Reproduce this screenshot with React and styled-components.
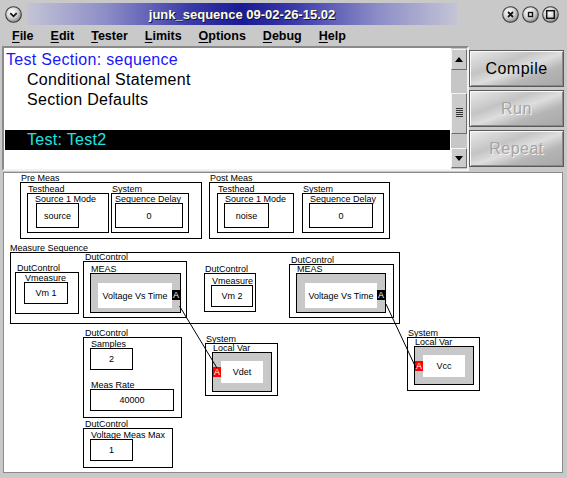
import React from "react"
import styled, { createGlobalStyle } from "styled-components"

const GlobalStyle = createGlobalStyle`
    html, body { margin:0; padding:0; background:#c9c9c9; }
    body { font-family:"Liberation Sans", Arial, sans-serif; }
`

const Window = styled.div`
    width:567px;
    height:478px;
    background:#c9c9c9;
    display:flex;
    flex-direction:column;
    overflow:hidden;
`

// Title bar
const TitleBar = styled.div`
    height:25px;
    display:flex;
    align-items:stretch;
`
const TitleCap = styled.div`
    width:${props => props.$w}px;
    display:flex;
    align-items:center;
    justify-content:${props => props.$end ? "flex-end" : "center"};
    gap:3px;
    padding:3px ${props => props.$end ? "8px" : "0"} 0 0;
    box-sizing:border-box;
`
const TitleGradient = styled.div`
    flex:1;
    margin-top:3px;
    background:linear-gradient(to right, #c4c4d6 0%, #8e8ec8 18%, #3a3aa8 38%, #1a1a96 50%, #3a3aa8 62%, #8e8ec8 82%, #c4c4d6 100%);
    display:flex;
    align-items:center;
    justify-content:center;
    color:#ffffd8;
    font-weight:bold;
    font-size:13px;
    text-shadow:1px 1px 0 #10105a;
    white-space:nowrap;
`

// Menu
const MenuBar = styled.div`
    height:21px;
    display:flex;
    align-items:center;
    gap:17px;
    padding-left:12px;
    font-weight:bold;
    font-size:12.5px;
    color:#000;
`
const MenuItem = styled.span`
    & u { text-underline-offset:2px; }
`

// Top section
const TopArea = styled.div`
    display:flex;
    padding-left:2px;
    height:125px;
`
const ListFrame = styled.div`
    display:flex;
    border-style:solid;
    border-width:2px;
    border-color:#8a8a8a #f2f2f2 #f2f2f2 #8a8a8a;
    height:125px;
    box-sizing:border-box;
`
const List = styled.div`
    width:447px;
    background:#fff;
    padding:2px 1px 0;
    box-sizing:border-box;
    font-size:16px;
    letter-spacing:0.3px;
`
const ListItem = styled.div`
    height:20px;
    line-height:20px;
    padding-left:${props => props.$indent ? 22 : 1}px;
    color:${props => props.$selected ? "#22e4e4" : props.$head ? "#1818f8" : "#000"};
    background:${props => props.$selected ? "#000" : "transparent"};
    white-space:nowrap;
`
const ScrollBar = styled.div`
    width:16px;
    background:#c6c6c6;
    display:flex;
    flex-direction:column;
    padding:1px 0;
    box-sizing:border-box;
`
const ScrollPart = styled.div`
    height:${props => props.$h}px;
    margin-top:${props => props.$mt ?? 0}px;
    box-sizing:border-box;
    border-style:solid;
    border-width:1px;
    border-color:#f4f4f4 #6e6e6e #6e6e6e #f4f4f4;
    background:#cbcbcb;
    display:flex;
    align-items:center;
    justify-content:center;
`
const Grip = styled.div`
    width:7px;
    height:10px;
    background:repeating-linear-gradient(to bottom, #333 0 1px, transparent 1px 2px);
`
const ButtonColumn = styled.div`
    display:flex;
    flex-direction:column;
    gap:3px;
    padding-top:4px;
    margin-left:0px;
`
const ToolButton = styled.div`
    width:95px;
    height:37px;
    box-sizing:border-box;
    border:1px solid #5a5a5a;
    box-shadow:inset 1px 1px 0 #fafafa, inset -1px -1px 0 #8a8a8a;
    background:linear-gradient(160deg, #eaeaea 0%, #c4c4c4 35%, #dedede 52%, #b6b6b6 70%, #a6a6a6 100%);
    display:flex;
    align-items:center;
    justify-content:center;
    font-size:16px;
    letter-spacing:0.5px;
    color:${props => props.$disabled ? "#a4a4a4" : "#000"};
    text-shadow:${props => props.$disabled ? "1px 1px 0 #f6f6f6" : "none"};
`

// Canvas / diagram
const Canvas = styled.div`
    position:relative;
    margin:1px 0 0 3px;
    width:558px;
    height:299px;
    background:#fff;
    border:1px solid #8a8a8a;
    font-size:9px;
    color:#000;
    overflow:hidden;
`
const Group = styled.div`
    display:flex;
    flex-direction:column;
    align-items:flex-start;
    margin-top:${props => props.$mt ?? 0}px;
    margin-left:${props => props.$ml ?? 0}px;
`
const Node = styled(Group)`
    position:absolute;
    left:${props => props.$x}px;
    top:${props => props.$y}px;
`
const Caption = styled.div`
    height:${props => props.$h ?? 8}px;
    line-height:${props => props.$h ?? 8}px;
    padding-left:${props => props.$indent ?? 1}px;
    white-space:nowrap;
`
const Frame = styled.div`
    box-sizing:border-box;
    width:${props => props.$w}px;
    height:${props => props.$h}px;
    border:1px solid #000;
    padding:${props => props.$pad};
    display:flex;
    flex-direction:${props => props.$col ? "column" : "row"};
    align-items:flex-start;
    gap:${props => props.$gap ?? 0}px;
`
const ValueBox = styled.div`
    box-sizing:border-box;
    width:${props => props.$w}px;
    height:${props => props.$h}px;
    margin-left:${props => props.$ml ?? 0}px;
    border:1px solid #000;
    display:flex;
    align-items:center;
    justify-content:center;
    white-space:nowrap;
`
const VarBox = styled.div`
    box-sizing:border-box;
    width:${props => props.$w}px;
    height:${props => props.$h}px;
    border:1px solid #000;
    background:#c8c8c8;
    padding-left:${props => props.$pl ?? 0}px;
    display:flex;
    align-items:flex-start;
`
const VarValue = styled.div`
    width:${props => props.$w}px;
    height:${props => props.$h}px;
    margin-top:${props => props.$mt}px;
    background:#fff;
    display:flex;
    align-items:center;
    justify-content:center;
    white-space:nowrap;
`
const Badge = styled.div`
    width:8px;
    height:10px;
    margin-top:${props => props.$mt}px;
    background:${props => props.$red ? "#ff0000" : "#000"};
    color:#fff;
    font-size:9px;
    line-height:10px;
    text-align:center;
`
const Wires = styled.svg`
    position:absolute;
    left:0;
    top:0;
    pointer-events:none;
`

function RoundButton({ kind }) {
    return (
        <svg width="17" height="17" viewBox="0 0 17 17">
            <defs>
                <radialGradient id={`g-${kind}`} cx="40%" cy="35%" r="65%">
                    <stop offset="0%" stopColor="#ffffff" />
                    <stop offset="55%" stopColor="#d6d6d6" />
                    <stop offset="100%" stopColor="#8a8a8a" />
                </radialGradient>
            </defs>
            <circle cx="8.5" cy="8.5" r="7.8" fill={`url(#g-${kind})`} stroke="#3c3c3c" strokeWidth="1.1" />
            {kind === "menu" && <path d="M5.3 7.2 L8.5 10.4 L11.7 7.2" fill="none" stroke="#111" strokeWidth="1.7" />}
            {kind === "close" && <path d="M6 6 L11 11 M11 6 L6 11" stroke="#111" strokeWidth="1.8" />}
            {kind === "min" && <rect x="6.5" y="6.5" width="4" height="4" fill="none" stroke="#111" strokeWidth="1.4" />}
            {kind === "max" && <rect x="4.7" y="4.7" width="7.6" height="7.6" fill="none" stroke="#111" strokeWidth="1.5" />}
        </svg>
    )
}

function Arrow({ up }) {
    return (
        <svg width="8" height="5" viewBox="0 0 8 5">
            <path d={up ? "M0 5 L4 0 L8 5 Z" : "M0 0 L4 5 L8 0 Z"} fill="#000" />
        </svg>
    )
}

function Field({ label, value, w, h = 22, mt, ml, indent = 1 }) {
    return (
        <Group $mt={mt}>
            <Caption $h={7} $indent={indent}>{label}</Caption>
            <ValueBox $w={w} $h={h} $ml={ml}>{value}</ValueBox>
        </Group>
    )
}

const menus = ["File", "Edit", "Tester", "Limits", "Options", "Debug", "Help"]

export default function App() {
    return (
        <Window>
            <GlobalStyle />
            <TitleBar>
                <TitleCap $w={27}><RoundButton kind="menu" /></TitleCap>
                <TitleGradient>junk_sequence 09-02-26-15.02</TitleGradient>
                <TitleCap $w={110} $end>
                    <RoundButton kind="close" />
                    <RoundButton kind="min" />
                    <RoundButton kind="max" />
                </TitleCap>
            </TitleBar>

            <MenuBar>
                {menus.map(m => (
                    <MenuItem key={m}><u>{m[0]}</u>{m.slice(1)}</MenuItem>
                ))}
            </MenuBar>

            <TopArea>
                <ListFrame>
                    <List>
                        <ListItem $head>Test Section: sequence</ListItem>
                        <ListItem $indent>Conditional Statement</ListItem>
                        <ListItem $indent>Section Defaults</ListItem>
                        <ListItem $indent></ListItem>
                        <ListItem $indent $selected>Test: Test2</ListItem>
                    </List>
                    <ScrollBar>
                        <ScrollPart $h={21}><Arrow up /></ScrollPart>
                        <ScrollPart $h={43} $mt={23}><Grip /></ScrollPart>
                        <ScrollPart $h={20} $mt={14}><Arrow /></ScrollPart>
                    </ScrollBar>
                </ListFrame>
                <ButtonColumn>
                    <ToolButton>Compile</ToolButton>
                    <ToolButton $disabled>Run</ToolButton>
                    <ToolButton $disabled>Repeat</ToolButton>
                </ButtonColumn>
            </TopArea>

            <Canvas>
                {/* Pre Meas */}
                <Node $x={16} $y={1}>
                    <Caption>Pre Meas</Caption>
                    <Frame $w={182} $h={57} $pad="2px 0 0 6px" $gap={2}>
                        <Group>
                            <Caption>Testhead</Caption>
                            <Frame $w={82} $h={40} $pad="2px 0 0 7px" $col>
                                <Field label="Source 1 Mode" value="source" w={43} h={25} ml={1} indent={0} />
                            </Frame>
                        </Group>
                        <Group>
                            <Caption>System</Caption>
                            <Frame $w={78} $h={40} $pad="2px 0 0 3px" $col>
                                <Field label="Sequence Delay" value="0" w={68} h={25} indent={0} />
                            </Frame>
                        </Group>
                    </Frame>
                </Node>

                {/* Post Meas */}
                <Node $x={205} $y={1}>
                    <Caption>Post Meas</Caption>
                    <Frame $w={181} $h={57} $pad="2px 0 0 7px" $gap={8}>
                        <Group>
                            <Caption>Testhead</Caption>
                            <Frame $w={77} $h={40} $pad="2px 0 0 6px" $col>
                                <Field label="Source 1 Mode" value="noise" w={45} h={25} />
                            </Frame>
                        </Group>
                        <Group>
                            <Caption>System</Caption>
                            <Frame $w={82} $h={40} $pad="2px 0 0 6px" $col>
                                <Field label="Sequence Delay" value="0" w={64} h={25} />
                            </Frame>
                        </Group>
                    </Frame>
                </Node>

                {/* Measure Sequence */}
                <Node $x={6} $y={71}>
                    <Caption $indent={0}>Measure Sequence</Caption>
                    <Frame $w={390} $h={72} $pad="0 0 0 4px">
                        <Group $mt={11}>
                            <Caption $indent={2}>DutControl</Caption>
                            <Frame $w={64} $h={42} $pad="2px 0 0 8px" $col>
                                <Field label="Vmeasure" value="Vm 1" w={44} />
                            </Frame>
                        </Group>
                        <Group $ml={4}>
                            <Caption $indent={2}>DutControl</Caption>
                            <Frame $w={104} $h={57} $pad="3px 0 0 6px" $col>
                                <Caption>MEAS</Caption>
                                <VarBox $w={91} $h={40} $pl={7}>
                                    <VarValue $w={74} $h={25} $mt={9}>Voltage Vs Time</VarValue>
                                    <Badge $mt={16}>A</Badge>
                                </VarBox>
                            </Frame>
                        </Group>
                        <Group $mt={12} $ml={17}>
                            <Caption>DutControl</Caption>
                            <Frame $w={52} $h={39} $pad="4px 0 0 6px" $col>
                                <Field label="Vmeasure" value="Vm 2" w={42} />
                            </Frame>
                        </Group>
                        <Group $mt={3} $ml={33}>
                            <Caption $indent={2}>DutControl</Caption>
                            <Frame $w={105} $h={54} $pad="0 0 0 6px" $col>
                                <Caption>MEAS</Caption>
                                <VarBox $w={90} $h={40} $pl={8}>
                                    <VarValue $w={72} $h={25} $mt={9}>Voltage Vs Time</VarValue>
                                    <Badge $mt={16}>A</Badge>
                                </VarBox>
                            </Frame>
                        </Group>
                    </Frame>
                </Node>

                {/* DutControl: samples / rate */}
                <Node $x={79} $y={156}>
                    <Caption $indent={2}>DutControl</Caption>
                    <Frame $w={99} $h={81} $pad="3px 0 0 6px" $col>
                        <Field label="Samples" value="2" w={43} />
                        <Field label="Meas Rate" value="40000" w={84} mt={12} />
                    </Frame>
                </Node>

                {/* DutControl: voltage meas max */}
                <Node $x={79} $y={247}>
                    <Caption $indent={2}>DutControl</Caption>
                    <Frame $w={90} $h={40} $pad="3px 0 0 6px" $col>
                        <Field label="Voltage Meas Max" value="1" w={43} />
                    </Frame>
                </Node>

                {/* System: Vdet */}
                <Node $x={201} $y={162}>
                    <Caption>System</Caption>
                    <Frame $w={73} $h={53} $pad="0 0 0 6px" $col>
                        <Caption>Local Var</Caption>
                        <VarBox $w={60} $h={40}>
                            <Badge $red $mt={14}>A</Badge>
                            <VarValue $w={42} $h={22} $mt={8}>Vdet</VarValue>
                        </VarBox>
                    </Frame>
                </Node>

                {/* System: Vcc */}
                <Node $x={403} $y={156}>
                    <Caption>System</Caption>
                    <Frame $w={73} $h={54} $pad="0 0 0 6px" $col>
                        <Caption>Local Var</Caption>
                        <VarBox $w={60} $h={39}>
                            <Badge $red $mt={14}>A</Badge>
                            <VarValue $w={42} $h={22} $mt={8}>Vcc</VarValue>
                        </VarBox>
                    </Frame>
                </Node>

                <Wires width="558" height="299">
                    <line x1="175.5" y1="133" x2="213" y2="195" stroke="#000" strokeWidth="1" />
                    <line x1="382" y1="131" x2="412" y2="195" stroke="#000" strokeWidth="1" />
                </Wires>
            </Canvas>
        </Window>
    )
}
